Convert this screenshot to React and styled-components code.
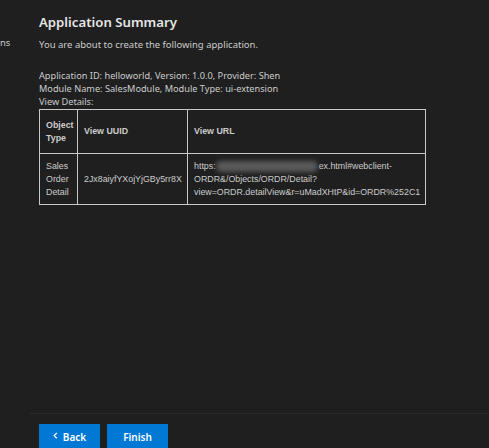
import React from "react";
import styled, { createGlobalStyle } from "styled-components";

const Global = createGlobalStyle`
  html, body { margin: 0; padding: 0; background: #1f1f1f; }
  #root { height: 448px; }
`;

const Shell = styled.div`
  display: flex;
  height: 448px;
  width: 489px;
  overflow: hidden;
  background: #1f1f1f;
  font-family: "Segoe UI", "Noto Sans", "Open Sans", sans-serif;
  color: #cccccc;
`;

const Side = styled.div`
  width: 30px;
  flex: none;
  padding-top: 36px;
  font-size: 9.5px;
  line-height: 14px;
  color: #cccccc;
  box-sizing: border-box;
`;

const Main = styled.div`
  flex: 1;
  display: flex;
  flex-direction: column;
  min-width: 0;
`;

const Content = styled.div`
  flex: 1;
  padding: 13px 0 0 9px;
`;

const Title = styled.h1`
  margin: 0;
  font-size: 13.2px;
  font-weight: 600;
  line-height: 18px;
  color: #e6e6e6;
`;

const Lead = styled.p`
  margin: 7px 0 0;
  font-size: 9.5px;
  line-height: 14px;
  color: #cccccc;
`;

const Details = styled.div`
  margin-top: 17px;
  font-size: 9.2px;
  line-height: 13px;
  color: #cccccc;
`;

const Table = styled.table`
  border-collapse: collapse;
  table-layout: fixed;
  margin-top: 1px;
  font-family: "Liberation Sans", Arial, sans-serif;
  font-size: 8.85px;
  line-height: 13px;
  color: #cccccc;
  width: 386px;
`;

const Col = styled.col`
  width: ${(p) => p.$w};
`;

const Th = styled.th`
  border: 1px solid #c8c8c8;
  text-align: left;
  font-weight: 700;
  padding: 8px 5px 8px 6px;
  height: 44px;
  box-sizing: border-box;
  vertical-align: middle;
`;

const Td = styled.td`
  border: 1px solid #c8c8c8;
  padding: 6px 5px 5px 6px;
  vertical-align: middle;
`;

const Blur = styled.span`
  display: inline-block;
  width: 102px;
  height: 11px;
  background: #5a5a5a;
  border-radius: 5px;
  filter: blur(2.5px);
  vertical-align: middle;
  margin: 0 1px 0 0;
`;

const Footer = styled.div`
  border-top: 1px solid #2b2b2b;
  flex: none;
  display: flex;
  gap: 7px;
  padding: 10px 0 0 9px;
  box-sizing: border-box;
  height: 35px;
`;

const Button = styled.button`
  width: 61px;
  height: 26px;
  border: none;
  background: #0078d4;
  color: #ffffff;
  font-family: "Segoe UI", "Noto Sans", "Open Sans", sans-serif;
  font-size: 10px;
  font-weight: 600;
  display: flex;
  align-items: center;
  justify-content: center;
  gap: 5px;
  padding: 0;
  flex: none;
`;

const Chevron = () => (
  <svg width="5" height="8" viewBox="0 0 5 8" style={{ marginTop: -3 }}>
    <path d="M3.8 1 L1.2 3.6 L3.8 6.2" fill="none" stroke="#fff" strokeWidth="1.3" />
  </svg>
);

export default function App() {
  return (
    <>
      <Global />
      <Shell>
        <Side>ns</Side>
        <Main>
          <Content>
            <Title>Application Summary</Title>
            <Lead>You are about to create the following application.</Lead>
            <Details>
              <div>Application ID: helloworld, Version: 1.0.0, Provider: Shen</div>
              <div>Module Name: SalesModule, Module Type: ui-extension</div>
              <div>View Details:</div>
            </Details>
            <Table>
              <colgroup>
                <Col $w="38px" />
                <Col $w="110px" />
                <Col $w="238px" />
              </colgroup>
              <thead>
                <tr>
                  <Th>Object Type</Th>
                  <Th>View UUID</Th>
                  <Th>View URL</Th>
                </tr>
              </thead>
              <tbody>
                <tr>
                  <Td>Sales Order Detail</Td>
                  <Td>2Jx8aiyfYXojYjGBy5rr8X</Td>
                  <Td>
                    https:<Blur />ex.html#webclient-ORDR&amp;/Objects/ORDR/Detail?view=ORDR.detailView&amp;r=uMadXHtP&amp;id=ORDR%252C1
                  </Td>
                </tr>
              </tbody>
            </Table>
          </Content>
          <Footer>
            <Button>
              <Chevron />
              Back
            </Button>
            <Button>Finish</Button>
          </Footer>
        </Main>
      </Shell>
    </>
  );
}
